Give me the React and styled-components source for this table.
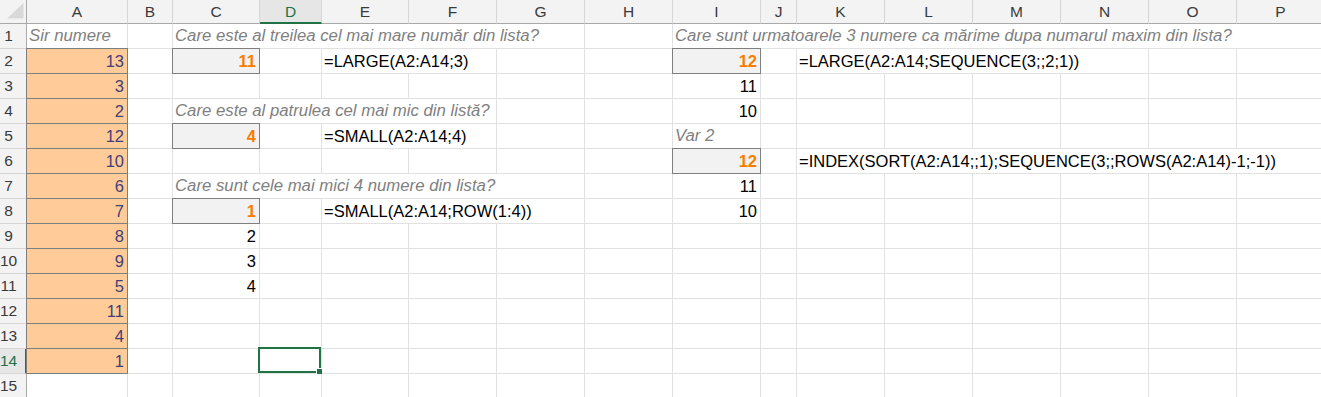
import React from 'react';
import styled, { createGlobalStyle, css } from 'styled-components';

const GRID = '#E1E1E1';
const HEAD_BG = '#F3F3F3';
const HEAD_LINE = '#D6D6D6';
const HEAD_EDGE = '#A9A9A9';
const GREEN = '#217346';
const BOX_EDGE = '#7F7F7F';

const COLS = [
  { key: 'A', w: 101 },
  { key: 'B', w: 45 },
  { key: 'C', w: 87 },
  { key: 'D', w: 62 },
  { key: 'E', w: 87 },
  { key: 'F', w: 88 },
  { key: 'G', w: 88 },
  { key: 'H', w: 88 },
  { key: 'I', w: 88 },
  { key: 'J', w: 36 },
  { key: 'K', w: 88 },
  { key: 'L', w: 88 },
  { key: 'M', w: 88 },
  { key: 'N', w: 88 },
  { key: 'O', w: 88 },
  { key: 'P', w: 88 },
];

const ROW_COUNT = 15;
const ACTIVE = { col: 'D', row: 14 };

const INPUT = [13, 3, 2, 12, 10, 6, 7, 8, 9, 5, 11, 4, 1];

// Sheet contents keyed by row; span = how many columns the text runs over
const CONTENT = {
  1: [
    { col: 'A', kind: 'note', text: 'Sir numere' },
    { col: 'C', span: 5, kind: 'note', text: 'Care este al treilea cel mai mare număr din lista?' },
    { col: 'I', span: 8, kind: 'note', text: 'Care sunt urmatoarele 3 numere ca mărime dupa numarul maxim din lista?' },
  ],
  2: [
    { col: 'C', kind: 'calc', text: '11' },
    { col: 'E', span: 2, kind: 'text', text: '=LARGE(A2:A14;3)' },
    { col: 'I', kind: 'calc', text: '12' },
    { col: 'K', span: 4, kind: 'text', text: '=LARGE(A2:A14;SEQUENCE(3;;2;1))' },
  ],
  3: [{ col: 'I', kind: 'num', text: '11' }],
  4: [
    { col: 'C', span: 4, kind: 'note', text: 'Care este al patrulea cel mai mic din listă?' },
    { col: 'I', kind: 'num', text: '10' },
  ],
  5: [
    { col: 'C', kind: 'calc', text: '4' },
    { col: 'E', span: 2, kind: 'text', text: '=SMALL(A2:A14;4)' },
    { col: 'I', kind: 'note', text: 'Var 2' },
  ],
  6: [
    { col: 'I', kind: 'calc', text: '12' },
    { col: 'K', span: 6, kind: 'text', text: '=INDEX(SORT(A2:A14;;1);SEQUENCE(3;;ROWS(A2:A14)-1;-1))' },
  ],
  7: [
    { col: 'C', span: 5, kind: 'note', text: 'Care sunt cele mai mici 4 numere din lista?' },
    { col: 'I', kind: 'num', text: '11' },
  ],
  8: [
    { col: 'C', kind: 'calc', text: '1' },
    { col: 'E', span: 3, kind: 'text', text: '=SMALL(A2:A14;ROW(1:4))' },
    { col: 'I', kind: 'num', text: '10' },
  ],
  9: [{ col: 'C', kind: 'num', text: '2' }],
  10: [{ col: 'C', kind: 'num', text: '3' }],
  11: [{ col: 'C', kind: 'num', text: '4' }],
};

INPUT.forEach((v, i) => {
  const r = i + 2;
  CONTENT[r] = [{ col: 'A', kind: 'input', text: String(v) }, ...(CONTENT[r] || [])];
});

const GlobalStyle = createGlobalStyle`
  html, body {
    margin: 0;
    padding: 0;
    background: #ffffff;
    overflow: hidden;
  }
  body {
    font-family: 'Liberation Sans', Arial, sans-serif;
  }
`;

const Sheet = styled.div`
  display: grid;
  grid-template-columns: 27px ${COLS.map((c) => `${c.w}px`).join(' ')};
  grid-template-rows: 24px repeat(${ROW_COUNT}, 25px);
  width: max-content;
`;

const Corner = styled.div`
  box-sizing: border-box;
  background: ${HEAD_BG};
  border-right: 1px solid ${HEAD_EDGE};
  border-bottom: 1px solid ${HEAD_EDGE};
  display: flex;
  align-items: flex-start;
  justify-content: flex-end;
`;

const CornerMark = styled.svg`
  display: block;
  margin: 3px 2px 0 0;
`;

const ColHead = styled.div`
  box-sizing: border-box;
  background: ${HEAD_BG};
  border-right: 1px solid ${HEAD_LINE};
  border-bottom: 1px solid ${HEAD_EDGE};
  display: flex;
  justify-content: center;
  font-size: 15.5px;
  line-height: 23px;
  color: #3a3a3a;
  ${(p) =>
    p.$active &&
    css`
      background: #e6e6e6;
      color: ${GREEN};
      border-bottom: 2px solid ${GREEN};
    `}
`;

const RowHead = styled.div`
  box-sizing: border-box;
  background: ${HEAD_BG};
  border-right: 1px solid ${HEAD_EDGE};
  border-bottom: 1px solid ${HEAD_LINE};
  display: flex;
  overflow: hidden;
  font-size: 15.5px;
  line-height: 24px;
  color: #3a3a3a;
  ${(p) =>
    p.$active &&
    css`
      background: #e6e6e6;
      color: ${GREEN};
      border-right: 2px solid ${GREEN};
    `}
`;

/* The row header column is wider than what is in view; numbers centre in the full width */
const RowNum = styled.span`
  flex: 0 0 37px;
  margin-left: -10px;
  text-align: center;
`;

const boxed = (fill) => css`
  background: ${fill};
  border-right-color: ${BOX_EDGE};
  border-bottom-color: ${BOX_EDGE};
  box-shadow: 0 -1px 0 0 ${BOX_EDGE}, -1px 0 0 0 ${BOX_EDGE}, -1px -1px 0 0 ${BOX_EDGE};
`;

const Cell = styled.div`
  box-sizing: border-box;
  grid-column: span ${(p) => p.$span || 1};
  position: relative;
  background: #ffffff;
  border-right: 1px solid ${GRID};
  border-bottom: 1px solid ${GRID};
  padding: 0 3px 0 2px;
  font-size: 16.5px;
  line-height: 24px;
  white-space: nowrap;
  color: #000000;
  text-align: left;
  ${(p) => p.$kind === 'note' && css`
    font-style: italic;
    font-size: 16.75px;
    color: #7f7f7f;
  `}
  ${(p) => p.$kind === 'num' && css`
    text-align: right;
  `}
  ${(p) => p.$kind === 'input' && css`
    ${boxed('#FFCC99')};
    color: #3f3f76;
    text-align: right;
  `}
  ${(p) => p.$kind === 'calc' && css`
    ${boxed('#F2F2F2')};
    color: #fa7d00;
    font-weight: bold;
    text-align: right;
  `}
`;

const Selection = styled.div`
  position: absolute;
  top: -2px;
  left: -2px;
  right: 0;
  bottom: 0;
  border: 2px solid ${GREEN};
  pointer-events: none;
`;

const FillHandle = styled.div`
  position: absolute;
  right: -4px;
  bottom: -4px;
  width: 5px;
  height: 5px;
  background: ${GREEN};
  border: 1px solid #ffffff;
`;

function Row({ index }) {
  const items = CONTENT[index] || [];
  const cells = [];
  for (let i = 0; i < COLS.length; ) {
    const col = COLS[i].key;
    const item = items.find((it) => it.col === col);
    const span = item?.span || 1;
    const selected = ACTIVE.col === col && ACTIVE.row === index;
    cells.push(
      <Cell key={col} $span={span} $kind={item?.kind}>
        {item?.text}
        {selected && (
          <Selection>
            <FillHandle />
          </Selection>
        )}
      </Cell>
    );
    i += span;
  }
  return (
    <>
      <RowHead $active={ACTIVE.row === index}>
        <RowNum>{index}</RowNum>
      </RowHead>
      {cells}
    </>
  );
}

export default function App() {
  return (
    <>
      <GlobalStyle />
      <Sheet>
        <Corner>
          <CornerMark width="17" height="16" viewBox="0 0 17 16">
            <polygon points="0,15.5 16.5,15.5 16.5,0" fill="#D9D9D9" />
          </CornerMark>
        </Corner>
        {COLS.map((c) => (
          <ColHead key={c.key} $active={ACTIVE.col === c.key}>
            {c.key}
          </ColHead>
        ))}
        {Array.from({ length: ROW_COUNT }, (_, i) => (
          <Row key={i + 1} index={i + 1} />
        ))}
      </Sheet>
    </>
  );
}
